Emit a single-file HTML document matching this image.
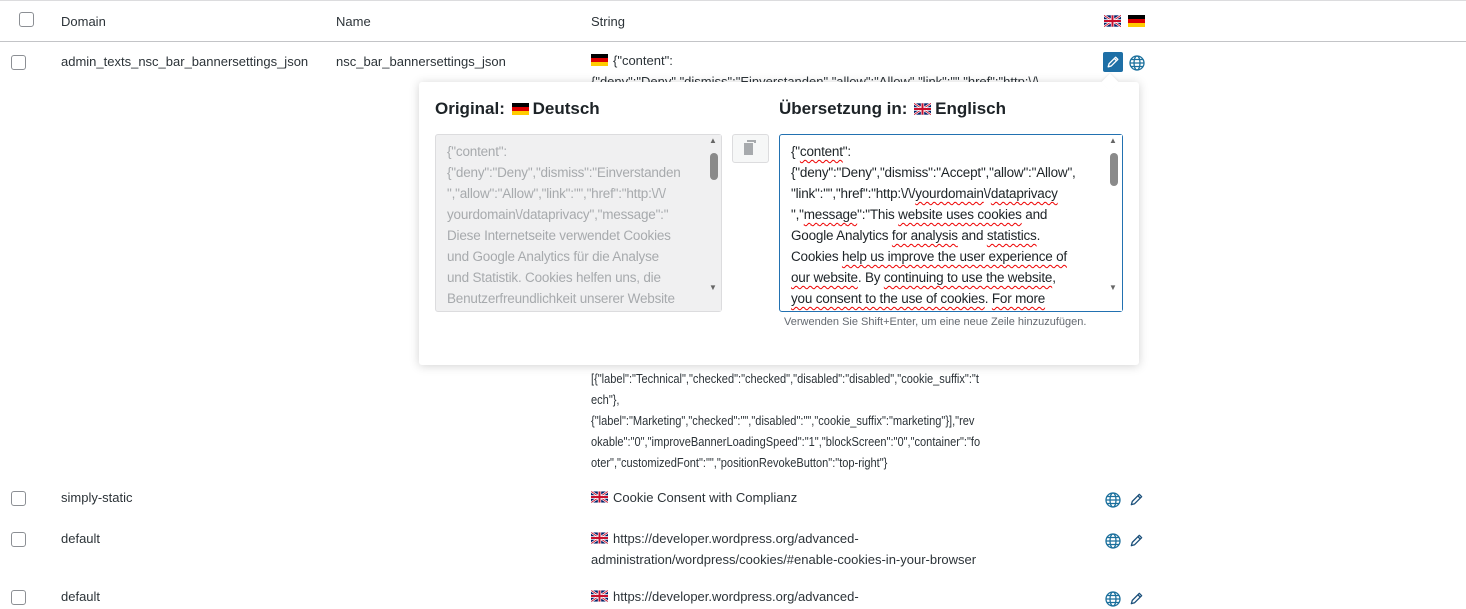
<!DOCTYPE html>
<html><head><meta charset="utf-8"><style>
*{box-sizing:border-box}
body{margin:0;width:1466px;height:609px;overflow:hidden;background:#fff;font-family:"Liberation Sans",sans-serif;font-size:13px;color:#2c3338;position:relative}
.a{position:absolute;white-space:nowrap}
.cb{position:absolute;width:15px;height:15px;border:1px solid #8c8f94;border-radius:3px;background:#fff}
.de{display:inline-block;width:17px;height:12px;background:linear-gradient(#000 0 33%,#d00 33% 66%,#fc0 66%);vertical-align:-1px;margin-right:5px}
.uk{display:inline-block;width:17px;height:12px;vertical-align:-1px;margin-right:5px}
.ic{position:absolute}
.ta{position:absolute;font-size:13.5px;line-height:21px;padding:6px 14px 0 11px;overflow:hidden;white-space:nowrap;letter-spacing:-0.2px}
.sq{text-decoration:underline wavy #e00;text-decoration-thickness:1px;text-underline-offset:3px}
</style></head><body>
<svg width="0" height="0" style="position:absolute"><defs>
<symbol id="ukf" viewBox="0 0 60 40"><rect width="60" height="40" fill="#012169"/><path d="M0 0L60 40M60 0L0 40" stroke="#fff" stroke-width="8"/><path d="M0 0L60 40M60 0L0 40" stroke="#c8102e" stroke-width="3"/><path d="M30 0V40M0 20H60" stroke="#fff" stroke-width="12"/><path d="M30 0V40M0 20H60" stroke="#c8102e" stroke-width="7"/></symbol>
<symbol id="globe" viewBox="0 0 16 16"><g fill="none" stroke="#1a6f9c" stroke-width="1.3"><circle cx="8" cy="8" r="7"/><ellipse cx="8" cy="8" rx="3" ry="7"/><path d="M1 8H15M2 4.5H14M2 11.5H14"/></g></symbol>
<symbol id="pen" viewBox="0 0 16 16"><g fill="none" stroke="#1a4f7a" stroke-width="1.4" stroke-linejoin="round"><path d="M2.5 13.5L3.5 10L11 2.5L13.5 5L6 12.5Z M9.5 4L12 6.5"/></g></symbol>
</defs></svg>

<div style="position:absolute;left:0;top:0;width:1466px;height:1px;background:#dcdcde"></div>
<div class="cb" style="left:19px;top:12px"></div>
<div class="a" style="left:61px;top:14px">Domain</div>
<div class="a" style="left:336px;top:14px">Name</div>
<div class="a" style="left:591px;top:14px">String</div>
<svg class="ic" style="left:1104px;top:15px" width="17" height="12"><use href="#ukf"/></svg>
<span class="de" style="position:absolute;left:1128px;top:15px"></span>
<div style="position:absolute;left:0;top:41px;width:1466px;height:1px;background:#c3c4c7"></div>

<div class="cb" style="left:11px;top:55px"></div>
<div class="a" style="left:61px;top:54px">admin_texts_nsc_bar_bannersettings_json</div>
<div class="a" style="left:336px;top:54px">nsc_bar_bannersettings_json</div>
<div class="a" style="left:591px;top:53px"><span class="de"></span>{"content":</div>
<div class="a" style="left:591px;top:74px">{"deny":"Deny","dismiss":"Einverstanden","allow":"Allow","link":"","href":"http:\/\</div>
<div style="position:absolute;left:1103px;top:52px;width:20px;height:20px;background:#1e6fa6;border-radius:2px"></div>
<svg class="ic" style="left:1106px;top:55px" width="14" height="14" viewBox="0 0 16 16"><path d="M2.5 13.5L3.5 10L11 2.5L13.5 5L6 12.5Z M9.5 4L12 6.5" fill="none" stroke="#fff" stroke-width="1.5" stroke-linejoin="round"/></svg>
<svg class="ic" style="left:1129px;top:55px" width="16" height="16"><use href="#globe"/></svg>

<div style="position:absolute;left:591px;top:368px;line-height:21px;white-space:nowrap;transform:scaleX(0.85);transform-origin:0 0">[{"label":"Technical","checked":"checked","disabled":"disabled","cookie_suffix":"t<br>ech"},<br>{"label":"Marketing","checked":"","disabled":"","cookie_suffix":"marketing"}],"rev<br>okable":"0","improveBannerLoadingSpeed":"1","blockScreen":"0","container":"fo<br>oter","customizedFont":"","positionRevokeButton":"top-right"}</div>

<!-- popover -->
<div style="position:absolute;left:419px;top:82px;width:720px;height:283px;background:#fff;box-shadow:0 1px 10px rgba(0,0,0,.18);border-radius:3px"></div>
<div style="position:absolute;left:1104px;top:76px;width:12px;height:12px;background:#fff;transform:rotate(45deg);box-shadow:-1px -1px 2px rgba(0,0,0,.06)"></div>
<div class="a" style="left:435px;top:99px;font-size:17px;font-weight:bold;color:#1d2327">Original: <span class="de" style="margin:0 4px 0 2px"></span>Deutsch</div>
<div class="a" style="left:779px;top:99px;font-size:17px;font-weight:bold;color:#1d2327">Übersetzung in: <svg width="17" height="12" style="vertical-align:-1px;margin:0 4px 0 2px"><use href="#ukf"/></svg>Englisch</div>

<div class="ta" style="left:435px;top:134px;width:287px;height:178px;background:#f0f0f1;border:1px solid #dcdcde;color:#a7aaad;border-radius:3px">{"content":<br>{"deny":"Deny","dismiss":"Einverstanden<br>","allow":"Allow","link":"","href":"http:\/\/<br>yourdomain\/dataprivacy","message":"<br>Diese Internetseite verwendet Cookies<br>und Google Analytics für die Analyse<br>und Statistik. Cookies helfen uns, die<br>Benutzerfreundlichkeit unserer Website</div>
<div style="position:absolute;left:708px;top:135px;width:13px;height:176px;background:#f0f0f1"></div>
<div style="position:absolute;left:710px;top:153px;width:8px;height:27px;background:#8a8a8a;border-radius:4px"></div>
<div class="a" style="left:709px;top:136px;font-size:8px;color:#666">▲</div>
<div class="a" style="left:709px;top:283px;font-size:8px;color:#666">▼</div>

<div style="position:absolute;left:732px;top:134px;width:37px;height:29px;background:#f6f7f7;border:1px solid #dcdcde;border-radius:3px"></div>
<div style="position:absolute;left:744px;top:143px;width:9px;height:12px;background:#a7aaad"></div>
<div style="position:absolute;left:747px;top:140px;width:9px;height:3px;border-top:2px solid #a7aaad;border-right:2px solid #a7aaad"></div>

<div class="ta" style="left:779px;top:134px;width:344px;height:178px;border:1px solid #2271b1;color:#1d2327;border-radius:3px">{"<span class="sq">content</span>":<br>{"deny":"Deny","dismiss":"Accept","allow":"Allow",<br>"link":"","href":"http:\/\/<span class="sq">yourdomain</span>\/<span class="sq">dataprivacy</span><br>","<span class="sq">message</span>":"This <span class="sq">website uses cookies</span> and<br>Google Analytics <span class="sq">for analysis</span> and <span class="sq">statistics</span>.<br>Cookies <span class="sq">help us improve the user experience of</span><br><span class="sq">our website</span>. By <span class="sq">continuing to use the website</span>,<br><span class="sq">you consent to the use of cookies</span>. <span class="sq">For more</span></div>
<div style="position:absolute;left:1106px;top:135px;width:16px;height:176px;background:#fff"></div>
<div style="position:absolute;left:1110px;top:153px;width:8px;height:33px;background:#8a8a8a;border-radius:4px"></div>
<div class="a" style="left:1109px;top:136px;font-size:8px;color:#666">▲</div>
<div class="a" style="left:1109px;top:283px;font-size:8px;color:#666">▼</div>
<div class="a" style="left:784px;top:316px;font-size:11px;color:#646970">Verwenden Sie Shift+Enter, um eine neue Zeile hinzuzufügen.</div>

<!-- rows -->
<div class="cb" style="left:11px;top:491px"></div>
<div class="a" style="left:61px;top:490px">simply-static</div>
<div class="a" style="left:591px;top:490px"><svg class="uk" viewBox="0 0 60 40"><use href="#ukf"/></svg>Cookie Consent with Complianz</div>
<svg class="ic" style="left:1105px;top:492px" width="16" height="16"><use href="#globe"/></svg>
<svg class="ic" style="left:1129px;top:492px" width="15" height="15"><use href="#pen"/></svg>

<div class="cb" style="left:11px;top:532px"></div>
<div class="a" style="left:61px;top:531px">default</div>
<div class="a" style="left:591px;top:531px"><svg class="uk" viewBox="0 0 60 40"><use href="#ukf"/></svg>https://developer.wordpress.org/advanced-</div>
<div class="a" style="left:591px;top:552px">administration/wordpress/cookies/#enable-cookies-in-your-browser</div>
<svg class="ic" style="left:1105px;top:533px" width="16" height="16"><use href="#globe"/></svg>
<svg class="ic" style="left:1129px;top:533px" width="15" height="15"><use href="#pen"/></svg>

<div class="cb" style="left:11px;top:590px"></div>
<div class="a" style="left:61px;top:589px">default</div>
<div class="a" style="left:591px;top:589px"><svg class="uk" viewBox="0 0 60 40"><use href="#ukf"/></svg>https://developer.wordpress.org/advanced-</div>
<svg class="ic" style="left:1105px;top:591px" width="16" height="16"><use href="#globe"/></svg>
<svg class="ic" style="left:1129px;top:591px" width="15" height="15"><use href="#pen"/></svg>
</body></html>
